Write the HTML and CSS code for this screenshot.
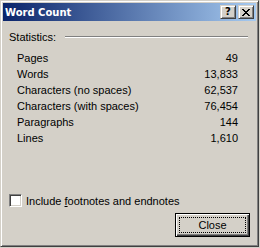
FILE: index.html
```html
<!DOCTYPE html>
<html>
<head>
  <meta charset="utf-8">
  <title>Word Count</title>
  <link rel="stylesheet" href="styles.css">
</head>
<body>
  <div class="window">
    <div class="titlebar">
      <span class="title">Word Count</span>
      <div class="caption-buttons">
        <button class="cap-btn help-btn">?</button>
        <button class="cap-btn close-btn">
          <svg width="8" height="7" viewBox="0 0 8 7" shape-rendering="crispEdges">
            <path d="M0 0h2v1h-2zM6 0h2v1h-2zM1 1h2v1h-2zM5 1h2v1h-2zM2 2h4v1h-4zM3 3h2v1h-2zM2 4h4v1h-4zM1 5h2v1h-2zM5 5h2v1h-2zM0 6h2v1h-2zM6 6h2v1h-2z" fill="#000"/>
          </svg>
        </button>
      </div>
    </div>

    <div class="content">
      <div class="section-head">
        <span>Statistics:</span>
        <div class="etched"></div>
      </div>

      <div class="stats">
        <div class="stat-row"><span>Pages</span><span>49</span></div>
        <div class="stat-row"><span>Words</span><span>13,833</span></div>
        <div class="stat-row"><span>Characters (no spaces)</span><span>62,537</span></div>
        <div class="stat-row"><span>Characters (with spaces)</span><span>76,454</span></div>
        <div class="stat-row"><span>Paragraphs</span><span>144</span></div>
        <div class="stat-row"><span>Lines</span><span>1,610</span></div>
      </div>

      <label class="check-row">
        <span class="checkbox"></span>
        <span>Include <u>f</u>ootnotes and endnotes</span>
      </label>

      <div class="button-row">
        <button class="push-btn default-btn"><span class="focus-rect">Close</span></button>
      </div>
    </div>
  </div>
</body>
</html>
```

FILE: styles.css
```css
body {
  margin: 0;
  background: #d4d0c8;
  font-family: "Liberation Sans", Arial, sans-serif;
  font-size: 11px;
  color: #000;
}

.window {
  width: 259px;
  height: 247px;
  box-sizing: border-box;
  background: #d4d0c8;
  border: 1px solid;
  border-color: #d4d0c8 #404040 #404040 #d4d0c8;
  box-shadow: inset 1px 1px #fff, inset -1px -1px #808080;
  padding: 2px;
  display: flex;
  flex-direction: column;
}

.titlebar {
  height: 18px;
  background: linear-gradient(to right, #0a246a 0%, #a6caf0 100%);
  display: flex;
  align-items: center;
  justify-content: space-between;
  padding: 0 2px;
}

.title {
  color: #fff;
  font-family: "DejaVu Sans", sans-serif;
  font-weight: bold;
  font-size: 10px;
  line-height: 18px;
  padding-top: 1px;
}

.caption-buttons {
  display: flex;
  gap: 2px;
}

.cap-btn {
  width: 16px;
  height: 14px;
  box-sizing: border-box;
  padding: 0;
  margin: 0;
  background: #d4d0c8;
  border: 1px solid;
  border-color: #d4d0c8 #404040 #404040 #d4d0c8;
  box-shadow: inset 1px 1px #fff, inset -1px -1px #808080;
  display: flex;
  align-items: center;
  justify-content: center;
  font-family: "DejaVu Sans", sans-serif;
  font-weight: bold;
  font-size: 10px;
  line-height: 12px;
  color: #000;
}

.content {
  flex: 1;
  padding: 8px 6px 0 6px;
  display: flex;
  flex-direction: column;
}

.section-head {
  display: flex;
  align-items: center;
  line-height: 16px;
}

.etched {
  flex: 1;
  height: 0;
  border-top: 1px solid #808080;
  border-bottom: 1px solid #fff;
  margin: 0 2px 0 9px;
}

.stats {
  margin-top: 5px;
  padding: 0 12px 0 8px;
}

.stat-row {
  display: flex;
  justify-content: space-between;
  line-height: 16px;
}

.check-row {
  margin-top: 47px;
  display: flex;
  align-items: flex-start;
  gap: 4px;
  line-height: 16px;
}

.checkbox {
  width: 13px;
  height: 13px;
  box-sizing: border-box;
  margin-top: 1px;
  background: #fff;
  border: 1px solid;
  border-color: #808080 #fff #fff #808080;
  box-shadow: inset 1px 1px #404040, inset -1px -1px #d4d0c8;
}

.button-row {
  margin-top: 4px;
  display: flex;
  justify-content: flex-end;
}

.push-btn {
  width: 75px;
  height: 24px;
  box-sizing: border-box;
  margin: 0;
  background: #d4d0c8;
  font-family: "Liberation Sans", Arial, sans-serif;
  font-size: 11px;
  color: #000;
  border: 1px solid #404040;
  box-shadow: inset 1px 1px #fff, inset -1px -1px #808080;
  padding: 3px;
  display: flex;
}

.default-btn {
  border-color: #000;
  box-shadow: inset 1px 1px #fff, inset -1px -1px #404040, inset -2px -2px #808080;
}

.focus-rect {
  flex: 1;
  border: 1px dotted #000;
  display: flex;
  align-items: center;
  justify-content: center;
  line-height: 14px;
}
```
